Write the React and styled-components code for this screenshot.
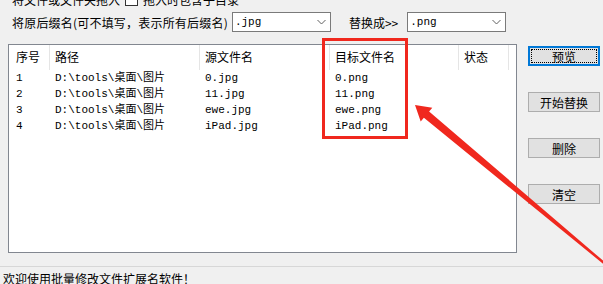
import React from 'react';
import styled, { createGlobalStyle, css } from 'styled-components';

const GlobalStyle = createGlobalStyle`
  html, body {
    margin: 0;
    padding: 0;
    background: #f0f0f0;
  }
`;

const Window = styled.div`
  position: relative;
  width: 603px;
  height: 284px;
  overflow: hidden;
  background: #f0f0f0;
  display: flex;
  flex-direction: column;
  font-family: "Noto Sans CJK SC", sans-serif;
  font-size: 12px;
  color: #000;
`;

const DropRow = styled.div`
  display: flex;
  align-items: center;
  height: 14px;
  margin-top: -8px;
  padding-left: 12px;
  white-space: nowrap;
`;

const CheckBox = styled.span`
  box-sizing: border-box;
  width: 13px;
  height: 13px;
  margin: 0 5px 0 5px;
  border: 1px solid #333;
  background: #fff;
`;

const FilterRow = styled.div`
  display: flex;
  align-items: center;
  height: 20px;
  margin-top: 6px;
  padding-left: 12px;
  white-space: nowrap;
`;

const Label = styled.span`
  margin-left: ${p => p.$gap || 0}px;
  letter-spacing: ${p => p.$spread || 0}px;
`;

const Combo = styled.div`
  box-sizing: border-box;
  width: 99px;
  height: 20px;
  margin-left: ${p => p.$gap}px;
  border: 1px solid #7a7a7a;
  background: #fff;
  display: flex;
  align-items: center;
  justify-content: space-between;
  padding: 0 4px 0 2px;
  font-family: "Liberation Mono", "Noto Sans CJK SC", monospace;
  font-size: 11px;
`;

const Main = styled.div`
  display: flex;
  margin-top: 12px;
  padding-left: 8px;
`;

const ListBox = styled.div`
  box-sizing: border-box;
  width: 509px;
  height: 209px;
  border: 1px solid #828790;
  background: #fff;
`;

const Grid = styled.div`
  display: grid;
  grid-template-columns: 41px 150px 130px 129px 50px;
  grid-template-rows: 25px;
  grid-auto-rows: 16px;
`;

const HeadCell = styled.div`
  line-height: 24px;
  padding-left: ${p => p.$pad || 6}px;
  border-right: 1px solid #e5e5e5;
  white-space: nowrap;
`;

const Cell = styled.div`
  line-height: 16px;
  padding-left: ${p => p.$pad || 6}px;
  font-family: "Liberation Mono", "Noto Sans CJK SC", monospace;
  font-size: 11px;
  white-space: nowrap;
`;

const Row = styled.div`
  display: contents;
`;

const Buttons = styled.div`
  display: flex;
  flex-direction: column;
  gap: 26px;
  margin-left: 11px;
  padding-top: 2px;
`;

const Button = styled.div`
  position: relative;
  box-sizing: border-box;
  width: 72px;
  height: 20px;
  border: 1px solid #adadad;
  background: #e1e1e1;
  display: flex;
  align-items: center;
  justify-content: center;
  ${p => p.$focused && css`
    border: 2px solid #0078d7;
    &::after {
      content: '';
      position: absolute;
      inset: 1px;
      border: 1px dotted #000;
    }
  `}
`;

const StatusBar = styled.div`
  margin-top: 13px;
  border-top: 1px solid #d7d7d7;
  padding: 4px 0 0 3px;
  line-height: 16px;
`;

const RedBox = styled.div`
  position: absolute;
  left: 322px;
  top: 38px;
  width: 86px;
  height: 101px;
  box-sizing: border-box;
  border: 3px solid #f0281e;
  pointer-events: none;
`;

const Overlay = styled.svg`
  position: absolute;
  left: 0;
  top: 0;
  pointer-events: none;
`;

const Chevron = () => (
  <svg width="9" height="6" viewBox="0 0 9 6">
    <polyline points="0.5,1 4.5,5 8.5,1" fill="none" stroke="#606060" strokeWidth="1" />
  </svg>
);

const rows = [
  ['1', 'D:\\tools\\桌面\\图片', '0.jpg', '0.png'],
  ['2', 'D:\\tools\\桌面\\图片', '11.jpg', '11.png'],
  ['3', 'D:\\tools\\桌面\\图片', 'ewe.jpg', 'ewe.png'],
  ['4', 'D:\\tools\\桌面\\图片', 'iPad.jpg', 'iPad.png'],
];

const headers = ['序号', '路径', '源文件名', '目标文件名', '状态'];

export default function App() {
  return (
    <Window>
      <GlobalStyle />
      <DropRow>
        <span>将文件或文件夹拖入</span>
        <CheckBox />
        <span>拖入时包含子目录</span>
      </DropRow>
      <FilterRow>
        <Label $spread={0.2}>将原后缀名(可不填写，表示所有后缀名)</Label>
        <Combo $gap={4}>
          <span>.jpg</span>
          <Chevron />
        </Combo>
        <Label $gap={18}>替换成&gt;&gt;</Label>
        <Combo $gap={9}>
          <span>.png</span>
          <Chevron />
        </Combo>
      </FilterRow>
      <Main>
        <ListBox>
          <Grid>
            <Row>
              {headers.map((h, i) => (
                <HeadCell key={h} $pad={i === 0 ? 7 : 5}>{h}</HeadCell>
              ))}
            </Row>
            {rows.map(r => (
              <Row key={r[0]}>
                {r.map((c, i) => (
                  <Cell key={i} $pad={i === 0 ? 7 : 5}>{c}</Cell>
                ))}
                <Cell />
              </Row>
            ))}
          </Grid>
        </ListBox>
        <Buttons>
          <Button $focused>预览</Button>
          <Button>开始替换</Button>
          <Button>删除</Button>
          <Button>清空</Button>
        </Buttons>
      </Main>
      <StatusBar>欢迎使用批量修改文件扩展名软件！</StatusBar>
      <RedBox />
      <Overlay width="603" height="284" viewBox="0 0 603 284">
        <polygon
          points="415,105 432.3,107.7 429.1,111.5 615,270.9 613.8,272.5 423.9,117.7 420.7,121.5"
          fill="#f0281e"
        />
      </Overlay>
    </Window>
  );
}
